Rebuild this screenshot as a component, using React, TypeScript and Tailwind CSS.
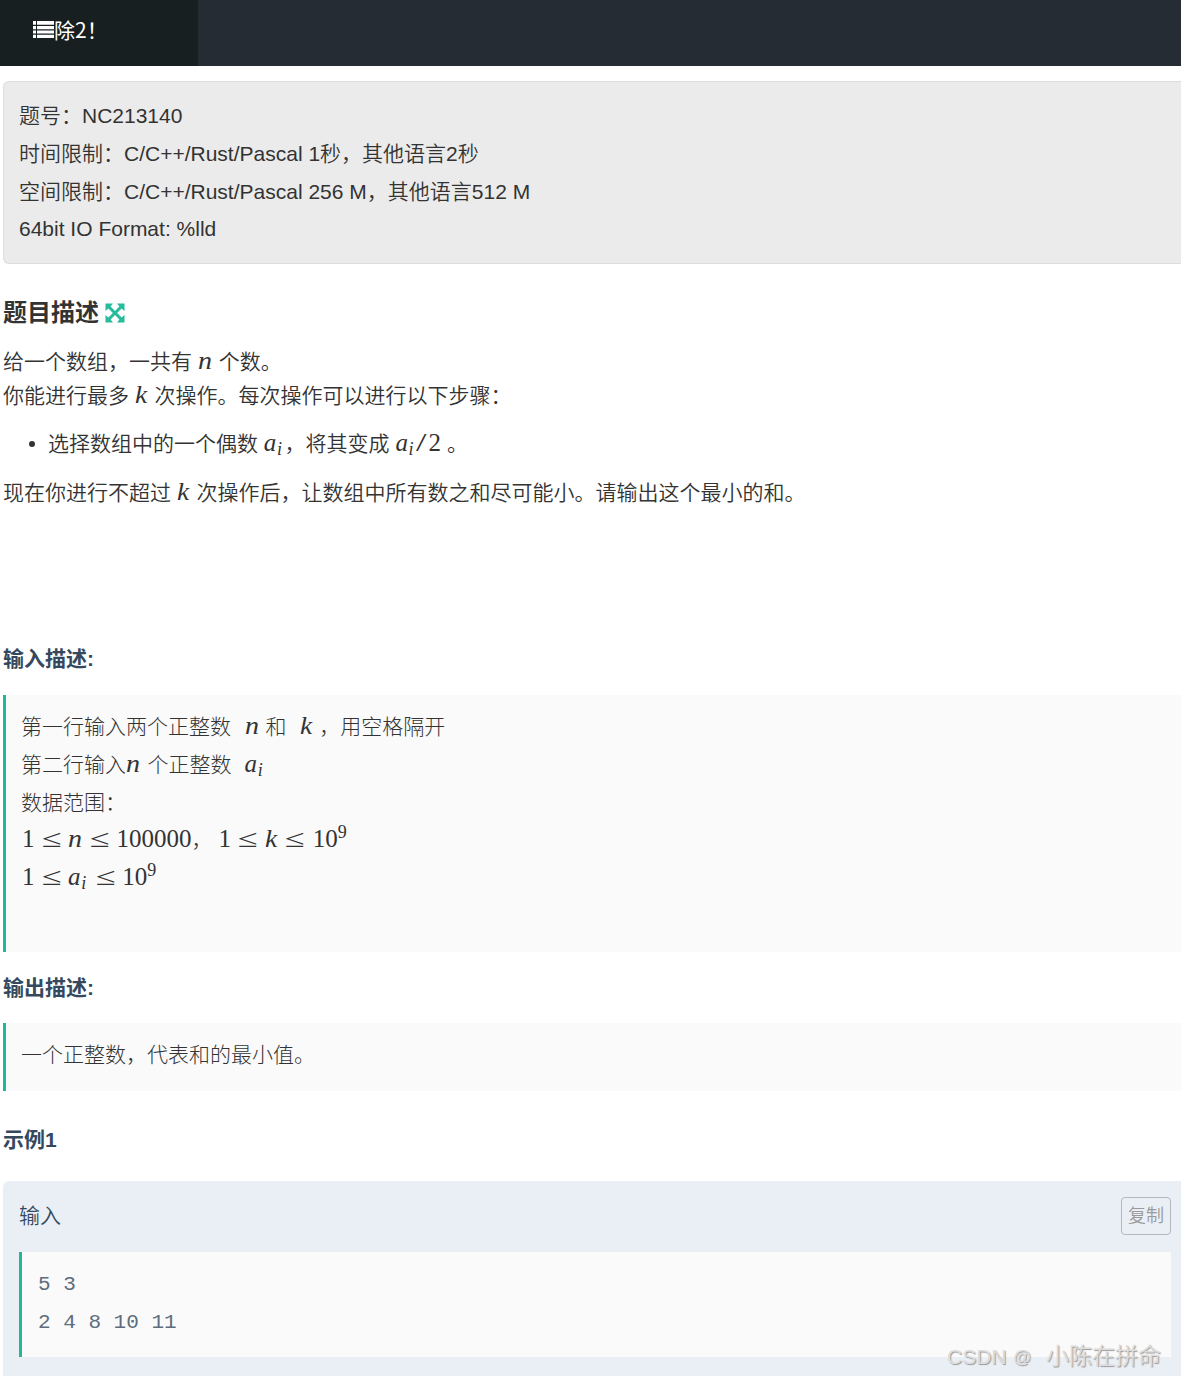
import type { ReactNode } from "react";

function N() {
  return <i className="inline-block w-[15px] origin-left scale-x-[1.12]">n</i>;
}

function K() {
  return <i className="inline-block w-[13.75px] origin-left scale-x-[1.1]">k</i>;
}

function Ai() {
  return (
    <span className="inline-flex w-[20.7px] items-baseline">
      <i className="w-[13.2px]">a</i>
      <i className="relative top-[4px] text-[18px] leading-none">i</i>
    </span>
  );
}

function Leq() {
  return <span className="mx-[7px] inline-block w-[19.5px] scale-x-[1.45] text-center">≤</span>;
}

function Pow() {
  return (
    <>
      10<span className="relative -top-[9px] text-[18px] leading-none">9</span>
    </>
  );
}

function Tex({ children, className = "" }: { children: ReactNode; className?: string }) {
  return (
    <span
      className={`inline-flex items-baseline whitespace-nowrap font-['Liberation_Serif',serif] text-[25px] leading-none text-[#333] ${className}`}
    >
      {children}
    </span>
  );
}

function SectionTitle({ children, className = "" }: { children: ReactNode; className?: string }) {
  return <h2 className={`ml-[3px] text-[21px] font-bold leading-[38px] text-[#34495e] ${className}`}>{children}</h2>;
}

export default function App() {
  return (
    <div className="relative h-[1376px] w-full overflow-hidden bg-white font-['Liberation_Sans','Noto_Sans_CJK_SC',sans-serif] text-[21px] font-[350] text-[#333]">
      <header className="flex h-[66px] bg-[#252c33]">
        <div className="flex w-[198px] items-center bg-[#181f21] pb-[7px] pl-[33px] text-white">
          <svg className="h-[17px] w-[21px]" viewBox="0 0 21 17" fill="currentColor">
            <path d="M0 0h3v3.700H0zM4 0h17v3.700H4zM0 5h3v3.200H0zM4 5h17v3.200H4zM0 9.400h3v3.200H0zM4 9.400h17v3.200H4zM0 13.800h3V17H0zM4 13.800h17V17H4z" />
          </svg>
          <span className="-mt-[2px] font-['Noto_Sans_CJK_SC',sans-serif] font-normal leading-[30px]">除2！</span>
        </div>
      </header>

      <section className="ml-[3px] mt-[15px] h-[183px] rounded-l-[6px] border border-r-0 border-[#ddd] bg-[#ebebeb] py-[15px] pl-[15px] leading-[37.8px]">
        <p>题号：NC213140</p>
        <p>时间限制：C/C++/Rust/Pascal 1秒，其他语言2秒</p>
        <p>空间限制：C/C++/Rust/Pascal 256 M，其他语言512 M</p>
        <p>64bit IO Format: %lld</p>
      </section>

      <h1 className="ml-[3px] mt-[30px] flex h-[38px] items-center gap-[6px] text-[24px] font-bold">
        题目描述
        <svg className="h-5 w-5 text-[#25bb9b]" viewBox="0 0 20 20" fill="currentColor">
          <path d="M.500.500H8L5.600 3.400 10 7.900l4.400-4.500L12 .500h7.500V8l-2.900-2.400L12.100 10l4.500 4.400 2.900-2.400v7.500H12l2.400-2.900-4.400-4.500-4.400 4.500L8 19.500H.500V12l2.900 2.400L7.900 10 3.400 5.600.500 8z" />
        </svg>
      </h1>

      <div className="ml-[3px] mt-[13px] leading-[34px]">
        <p className="h-[34px]">
          给一个数组，一共有 <Tex><N /></Tex> 个数。
        </p>
        <p className="h-[34px]">
          你能进行最多 <Tex><K /></Tex> 次操作。每次操作可以进行以下步骤：
        </p>
        <ul className="mb-[15px] mt-[14px] h-[34px] pl-[45px]">
          <li className="flex items-baseline before:-ml-[19px] before:mr-[13px] before:size-[6px] before:self-center before:rounded-full before:bg-[#333]">
            <span>
              选择数组中的一个偶数 <Tex><Ai /></Tex>，将其变成{" "}
              <Tex>
                <Ai />
                <span className="inline-block w-[12.5px] origin-left scale-x-[1.5]">/</span>2
              </Tex>{" "}
              。
            </span>
          </li>
        </ul>
        <p className="h-[34px]">
          现在你进行不超过 <Tex><K /></Tex> 次操作后，让数组中所有数之和尽可能小。请输出这个最小的和。
        </p>
      </div>

      <SectionTitle className="mt-[130px]">输入描述:</SectionTitle>
      <div className="ml-[3px] mt-[17px] h-[257px] border-l-[3px] border-[#1fb999] bg-[#fafafa] pl-[15px] pt-[13px] font-light leading-[38px]">
        <p className="h-[38px]">
          第一行输入两个正整数<Tex className="ml-[13.6px] mr-[6px]"><N /></Tex>和
          <Tex className="ml-[13px] mr-[6px]"><K /></Tex>，用空格隔开
        </p>
        <p className="h-[38px]">
          第二行输入<Tex className="mr-[6.5px]"><N /></Tex>个正整数<Tex className="ml-[13px]"><Ai /></Tex>
        </p>
        <p className="h-[37px]">数据范围：</p>
        <p className="ml-px h-[38px]">
          <Tex>1<Leq /><N /><Leq />100000</Tex>
          <span className="mr-[6px]">，</span>
          <Tex>1<Leq /><K /><Leq /><span className="w-px" /><Pow /></Tex>
        </p>
        <p className="ml-px h-[38px]">
          <Tex>1<Leq /><Ai /><Leq /><Pow /></Tex>
        </p>
      </div>

      <SectionTitle className="mt-[17px]">输出描述:</SectionTitle>
      <div className="ml-[3px] mt-[16px] h-[68px] border-l-[3px] border-[#1fb999] bg-[#fafafa] pl-[15px] pt-[13px] font-light leading-[38px]">
        一个正整数，代表和的最小值。
      </div>

      <SectionTitle className="mt-[30px]">示例1</SectionTitle>
      <section className="ml-[3px] mt-[22px] h-[197px] rounded-tl-[6px] bg-[#eaeff6] pl-4 pr-[10px] pt-4">
        <div className="flex h-[38px] items-center justify-between text-[#34495e]">
          <span>输入</span>
          <button className="h-[38px] w-[50px] rounded-[4px] border border-[#b3b7bb] text-[18px] text-[#999]">复制</button>
        </div>
        <pre className="mt-[17px] h-[105px] border-l-[3px] border-[#1fb999] bg-[#fafafa] pl-4 pt-[14px] font-['Liberation_Mono',monospace] leading-[38px] text-[#5d6d7e]">
          {"5 3\n2 4 8 10 11"}
        </pre>
      </section>

      <div className="absolute left-[947px] top-[1340px] flex items-baseline whitespace-pre text-[23px] leading-8 text-[#ddd] [text-shadow:1px_1px_1px_#999]">
        <span className="w-[66px] text-[21px]">CSDN</span>
        <span className="relative -top-px w-[33px] text-[18px]">@</span>
        <span>小陈在拼命</span>
      </div>
    </div>
  );
}
